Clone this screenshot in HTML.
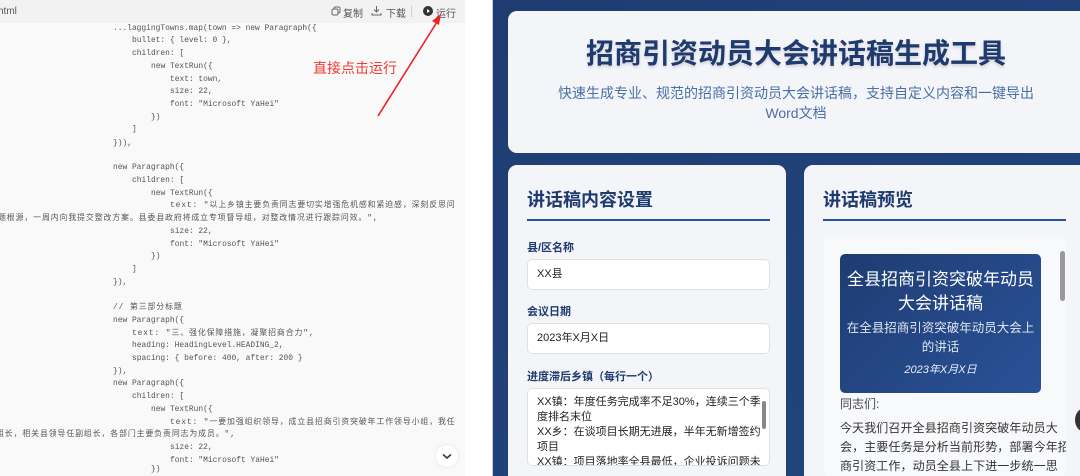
<!DOCTYPE html>
<html style="overflow:hidden"><head><meta charset="utf-8"><style>
*{margin:0;padding:0;box-sizing:border-box}
html,body{width:1080px;height:476px;overflow:hidden}
body{position:relative;background:#fff;font-family:"Liberation Sans","Noto Sans CJK SC",sans-serif}
#left{position:absolute;left:0;top:0;width:465px;height:476px;background:#f9f9f9;overflow:hidden}
#bar{position:absolute;left:0;top:0;width:465px;height:23px;background:#f2f2f2;font-size:10px;color:#555}
.c{position:absolute;white-space:pre;font-family:"Liberation Mono","Noto Sans CJK SC",monospace;font-size:7.9px;color:#555;line-height:12px}
.cj{letter-spacing:0.9px}
#right{position:absolute;left:492px;top:0;width:588px;height:476px;background:linear-gradient(135deg,#1e3c72,#22467f);border-left:1px solid #ccc;overflow:hidden}
.card{position:absolute;background:#f3f5f9;border-radius:9px;overflow:hidden}
h2{position:absolute;font-size:18px;font-weight:bold;color:#1e3a6e;line-height:20px}
.ul{position:absolute;height:2px;background:#2a5298}
.lb{position:absolute;font-size:11px;font-weight:bold;color:#1e3a6e}
.in{position:absolute;background:#fff;border:1.5px solid #dde1e7;border-radius:5px;font-size:11px;color:#222;padding-left:9px;line-height:28px}
</style></head><body>
<div id="left">
<div id="bar">
<span style="position:absolute;left:-2px;top:6px">html</span>
<svg style="position:absolute;left:331px;top:6px" width="10" height="10" viewBox="0 0 10 10"><rect x="3" y="1" width="6" height="6" rx="1.5" fill="none" stroke="#666" stroke-width="1"/><rect x="1" y="3" width="6" height="6" rx="1.5" fill="#f2f2f2" stroke="#666" stroke-width="1"/></svg>
<span style="position:absolute;left:343px;top:5px">复制</span>
<svg style="position:absolute;left:371px;top:5px" width="11" height="11" viewBox="0 0 11 11"><path d="M5.5 1v6M3 4.5l2.5 2.5 2.5-2.5M1 8v2h9V8" fill="none" stroke="#666" stroke-width="1"/></svg>
<span style="position:absolute;left:386px;top:5px">下载</span>
<div style="position:absolute;left:411px;top:6px;width:1px;height:11px;background:#ccc"></div>
<svg style="position:absolute;left:423px;top:6px" width="10" height="10" viewBox="0 0 10 10"><circle cx="5" cy="5" r="5" fill="#333"/><path d="M4 3v4l3-2z" fill="#fff"/></svg>
<span style="position:absolute;left:436px;top:5px">运行</span>
</div>
<div class="c" style="left:113px;top:23px">...laggingTowns.map(town =&gt; new Paragraph({</div>
<div class="c" style="left:132px;top:35px">bullet: { level: 0 },</div>
<div class="c" style="left:132px;top:48px">children: [</div>
<div class="c" style="left:151px;top:61px">new TextRun({</div>
<div class="c" style="left:170px;top:74px">text: town,</div>
<div class="c" style="left:170px;top:86px">size: 22,</div>
<div class="c" style="left:170px;top:99px">font: "Microsoft YaHei"</div>
<div class="c" style="left:151px;top:112px">})</div>
<div class="c" style="left:132px;top:124px">]</div>
<div class="c" style="left:113px;top:138px">})),</div>
<div class="c" style="left:113px;top:162px">new Paragraph({</div>
<div class="c" style="left:132px;top:175px">children: [</div>
<div class="c" style="left:151px;top:188px">new TextRun({</div>
<div class="c cj" style="left:170px;top:200px">text: "以上乡镇主要负责同志要切实增强危机感和紧迫感，深刻反思问</div>
<div class="c cj" style="left:-2px;top:213px">题根源，一周内向我提交整改方案。县委县政府将成立专项督导组，对整改情况进行跟踪问效。",</div>
<div class="c" style="left:170px;top:226px">size: 22,</div>
<div class="c" style="left:170px;top:239px">font: "Microsoft YaHei"</div>
<div class="c" style="left:151px;top:251px">})</div>
<div class="c" style="left:132px;top:264px">]</div>
<div class="c" style="left:113px;top:277px">}),</div>
<div class="c cj" style="left:113px;top:302px">// 第三部分标题</div>
<div class="c" style="left:113px;top:315px">new Paragraph({</div>
<div class="c cj" style="left:132px;top:328px">text: "三、强化保障措施，凝聚招商合力",</div>
<div class="c" style="left:132px;top:340px">heading: HeadingLevel.HEADING_2,</div>
<div class="c" style="left:132px;top:353px">spacing: { before: 400, after: 200 }</div>
<div class="c" style="left:113px;top:366px">}),</div>
<div class="c" style="left:113px;top:378px">new Paragraph({</div>
<div class="c" style="left:132px;top:391px">children: [</div>
<div class="c" style="left:151px;top:404px">new TextRun({</div>
<div class="c cj" style="left:170px;top:417px">text: "一要加强组织领导，成立县招商引资突破年工作领导小组，我任</div>
<div class="c cj" style="left:-4px;top:429px">组长，相关县领导任副组长，各部门主要负责同志为成员。",</div>
<div class="c" style="left:170px;top:442px">size: 22,</div>
<div class="c" style="left:170px;top:455px">font: "Microsoft YaHei"</div>
<div class="c" style="left:151px;top:464px">})</div>
<div style="position:absolute;left:313px;top:58px;font-size:14px;color:#f03a30">直接点击运行</div>
<svg style="position:absolute;left:0;top:0" width="465" height="476"><path d="M378 116L437 22" stroke="#ee2222" stroke-width="1.6"/><path d="M441 14l-9 7 7 4z" fill="#ee2222"/></svg>
<div style="position:absolute;left:436px;top:445px;width:22px;height:22px;border-radius:50%;background:#fff;box-shadow:0 0 3px rgba(0,0,0,.1)"><svg width="22" height="22"><path d="M7 9.5l4 3.5 4-3.5" fill="none" stroke="#333" stroke-width="1.5"/></svg></div>
</div>
<div id="right">
<div class="card" style="left:15px;top:11px;width:573px;height:142px;border-radius:9px 0 0 9px">
<div style="position:absolute;left:0;width:576px;top:21px;text-align:center;font-size:28px;font-weight:bold;color:#1e3a6e;text-shadow:0 2px 3px rgba(0,0,0,.15)">招商引资动员大会讲话稿生成工具</div>
<div style="position:absolute;left:40px;width:496px;top:72px;text-align:center;font-size:14px;line-height:20px;color:#4a6fa5">快速生成专业、规范的招商引资动员大会讲话稿，支持自定义内容和一键导出Word文档</div>
</div>
<div class="card" style="left:15px;top:165px;width:278px;height:311px;border-radius:9px 9px 0 0">
<h2 style="left:19px;top:25px">讲话稿内容设置</h2>
<div class="ul" style="left:19px;top:54px;width:243px"></div>
<div class="lb" style="left:19px;top:74px">县/区名称</div>
<div class="in" style="left:19px;top:94px;width:243px;height:31px">XX县</div>
<div class="lb" style="left:19px;top:138px">会议日期</div>
<div class="in" style="left:19px;top:158px;width:243px;height:31px">2023年X月X日</div>
<div class="lb" style="left:19px;top:203px">进度滞后乡镇（每行一个）</div>
<div class="in" style="left:19px;top:223px;width:243px;height:78px;line-height:15px;padding-top:6px;padding-right:8px;overflow:hidden;white-space:nowrap">XX镇：年度任务完成率不足30%，连续三个季<br>度排名末位<br>XX乡：在谈项目长期无进展，半年无新增签约<br>项目<br>XX镇：项目落地率全县最低，企业投诉问题未<div style="position:absolute;right:3px;top:12px;width:4px;height:28px;background:#888;border-radius:2px"></div></div>
</div>
<div class="card" style="left:311px;top:165px;width:277px;height:311px;border-radius:9px 0 0 0">
<h2 style="left:19px;top:25px">讲话稿预览</h2>
<div class="ul" style="left:19px;top:54px;width:243px"></div>
<div style="position:absolute;left:20px;top:72px;width:242px;height:239px;background:#f8f9fb;border-radius:4px;overflow:hidden">
<div style="position:absolute;left:16px;top:17px;width:201px;height:139px;border-radius:5px;background:linear-gradient(135deg,#1e3c72,#2a5298);color:#fff;text-align:center">
<div style="margin-top:14px;font-size:17px;line-height:24px">全县招商引资突破年动员<br>大会讲话稿</div>
<div style="margin-top:3px;font-size:12.5px;line-height:19px;color:#dfe6f2">在全县招商引资突破年动员大会上<br>的讲话</div>
<div style="margin-top:4px;font-size:11px;font-style:italic;color:#e8eef8">2023年X月X日</div>
</div>
<div style="position:absolute;left:16px;top:158px;font-size:12px;color:#444">同志们:</div>
<div style="position:absolute;left:16px;top:182px;width:230px;white-space:nowrap;font-size:12px;line-height:19px;color:#333;letter-spacing:0.1px">今天我们召开全县招商引资突破年动员大<br>会，主要任务是分析当前形势，部署今年招<br>商引资工作，动员全县上下进一步统一思</div>
<div style="position:absolute;left:236px;top:14px;width:5px;height:50px;background:#999;border-radius:3px"></div>
</div>
</div>
<div style="position:absolute;left:582px;top:408px;width:20px;height:24px;border-radius:50%;background:#333"></div>
</div>
</body></html>
